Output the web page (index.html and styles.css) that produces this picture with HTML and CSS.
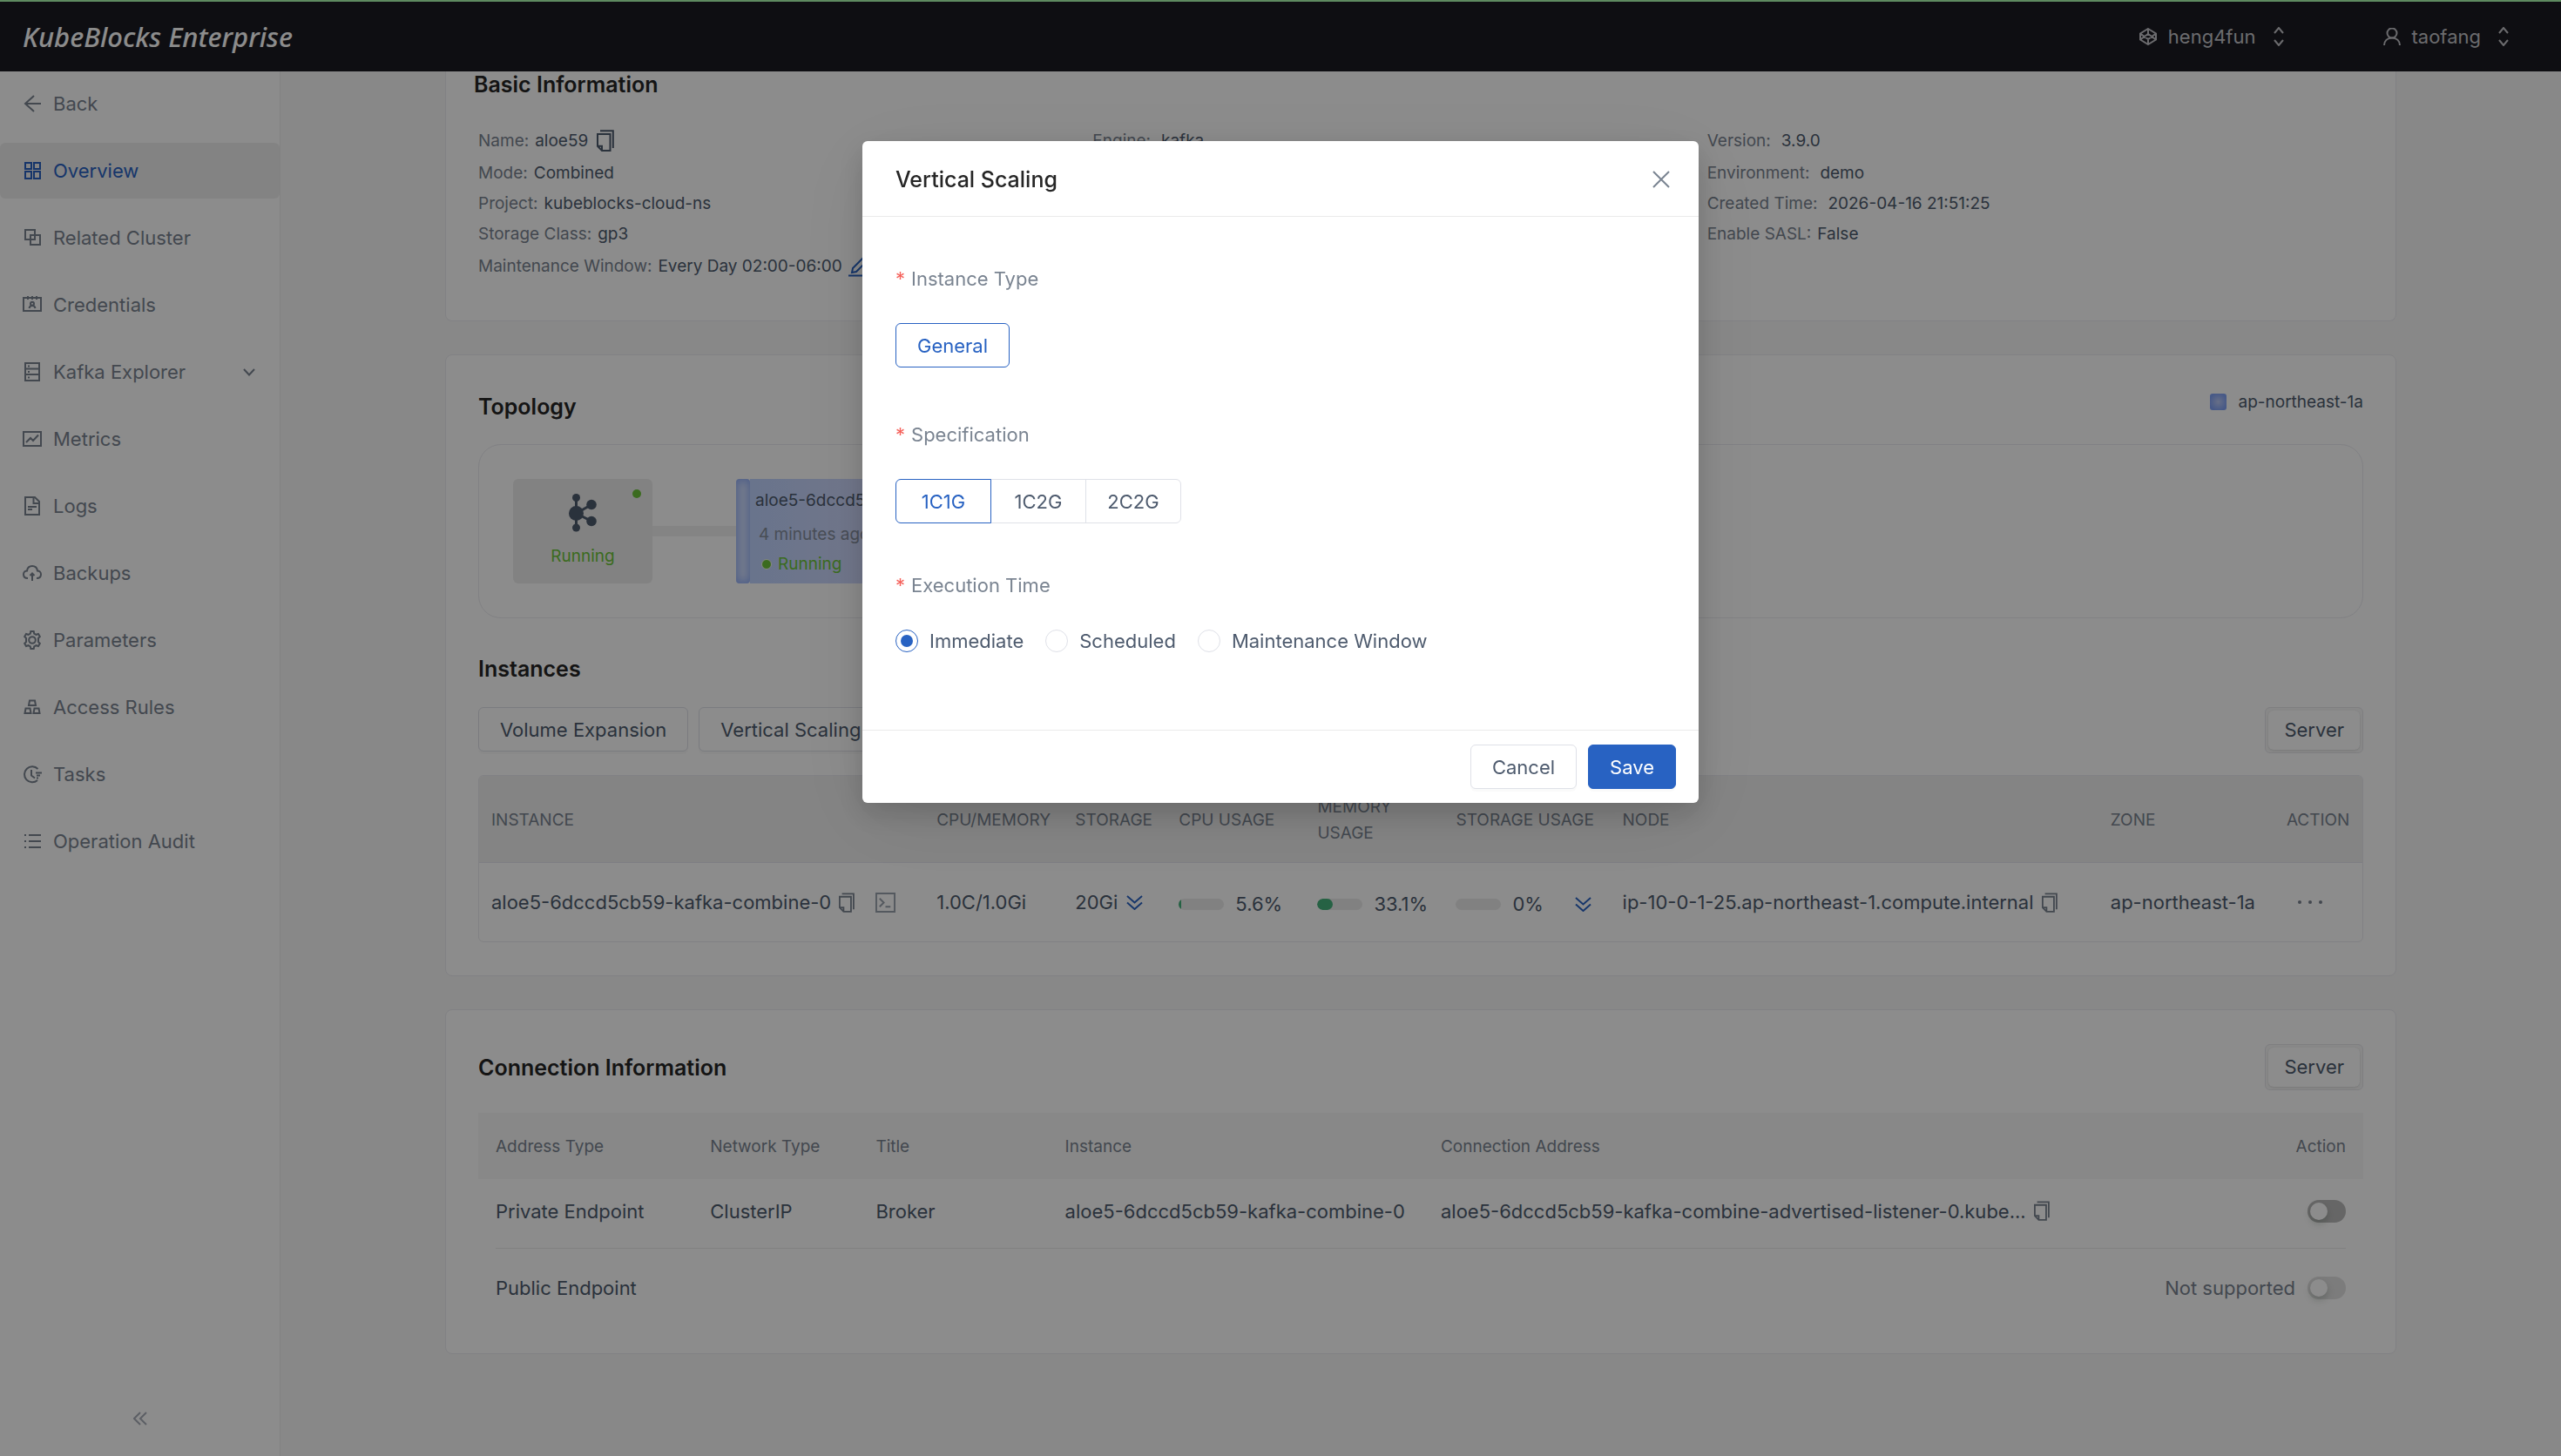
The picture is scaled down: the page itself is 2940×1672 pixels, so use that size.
FILE: index.html
```html
<!DOCTYPE html>
<html lang="en">
<head>
    <meta charset="UTF-8">
    <meta name="viewport" content="width=device-width, initial-scale=1.0">
    <title>Overview - KubeBlocks Enterprise</title>
    <link rel="stylesheet" href="styles.css">
</head>
<body>
    <!-- Shared icons -->
    <svg class="sprite" aria-hidden="true">
        <symbol id="copy" viewBox="0 0 20 25"><path d="M4 1.2H18.8V21M1 5H15.5V24H6L1 18.8ZM1 18.8H6V24"/></symbol>
        <symbol id="expand" viewBox="0 0 20 18"><path d="M1 1l9 8 9-8M1 9l9 8 9-8"/></symbol>
        <symbol id="updown" viewBox="0 0 12 22"><path d="M1 7l5-6 5 6M1 15l5 6 5-6"/></symbol>
    </svg>

    <header class="topbar">
        <div class="logo">KubeBlocks Enterprise</div>
        <div class="topbar-menus">
            <button class="topbar-menu" type="button">
                <svg class="icon-org" viewBox="0 0 20 20"><path d="M10 1l9 5.500v7L10 19l-9-5.500v-7zM1 6.500l9 6.500 9-6.500M1 13.500l9-6.500 9 6.500M10 1v6M10 13v6"/></svg>
                <span>heng4fun</span>
                <svg class="icon-updown"><use href="#updown"/></svg>
            </button>
            <button class="topbar-menu" type="button">
                <svg class="icon-org" viewBox="0 0 20 20"><circle cx="10" cy="6" r="5.500"/><path d="M1 20c0-5 3.500-8.500 9-8.500s9 3.500 9 8.500"/></svg>
                <span>taofang</span>
                <svg class="icon-updown"><use href="#updown"/></svg>
            </button>
        </div>
    </header>

    <div class="layout">
        <nav class="sidebar">
            <a class="nav-item" href="#">
                <svg viewBox="0 0 22 22"><path d="M21 11H3M13 2l-10 9 10 9"/></svg>Back
            </a>
            <a class="nav-item active" href="#">
                <svg viewBox="0 0 22 22"><path d="M3 2h7v7H3zM13 2h7v7h-7zM3 12h7v8H3zM13 12h7v8h-7z"/></svg>Overview
            </a>
            <a class="nav-item" href="#">
                <svg viewBox="0 0 22 22"><path d="M3 2h11v11H3zM9 8h11v11H9z"/></svg>Related Cluster
            </a>
            <a class="nav-item" href="#">
                <svg viewBox="0 0 22 22"><path d="M1 3h20v15H1zM6 1v4M11 1v4M16 1v4M7.500 15c.5-3 2-3 3.500-3s3 0 3.500 3"/><circle cx="11" cy="9.800" r="2"/></svg>Credentials
            </a>
            <a class="nav-item" href="#">
                <svg viewBox="0 0 22 22"><path d="M3 1h16v20H3zM3 7.500h16M3 14h16M6 4.500h2M6 11h2M6 17.500h2"/></svg>Kafka Explorer
                <svg class="nav-arrow" viewBox="0 0 14 9"><path d="M1 1l6 6.500L13 1"/></svg>
            </a>
            <a class="nav-item" href="#">
                <svg viewBox="0 0 22 22"><path d="M1 3h20v16H1zM4 15l5-5 3 3 6-6.500"/></svg>Metrics
            </a>
            <a class="nav-item" href="#">
                <svg viewBox="0 0 22 22"><path d="M3 1h11l5 5v15H3zM12.500 1v7H19M6 12h10M6 15h5"/></svg>Logs
            </a>
            <a class="nav-item" href="#">
                <svg viewBox="0 0 22 22"><path d="M6 17C2.500 17 1 15 1 12.500 1 10 3 8.500 5 8.500 5.500 5 8 3 11 3s5.500 2 6 5.500c2 0 4 1.500 4 4 0 2.500-1.500 4.500-5 4.500M11 20v-8M8.500 14l2.500-2.500 2.500 2.500"/></svg>Backups
            </a>
            <a class="nav-item" href="#">
                <svg viewBox="0 0 22 22"><circle cx="11" cy="11" r="3.800"/><path d="M8.800 3.500L9.300 1h3.400l.5 2.500 2.300 1.300 2.500-.8 1.800 3-1.800 1.800v4.400l1.800 1.800-1.800 3-2.500-.8-2.300 1.300-.5 2.500H9.300l-.5-2.500-2.300-1.300-2.500.8-1.800-3L4 13.200V8.800L2.200 7 4 4l2.500.8z"/></svg>Parameters
            </a>
            <a class="nav-item" href="#">
                <svg viewBox="0 0 22 22"><path d="M8 3.500h6L15 9H7zM3.500 12.500h5l1 5.500h-7zM13.500 12.500h5l1 5.500h-7z"/></svg>Access Rules
            </a>
            <a class="nav-item" href="#">
                <svg viewBox="0 0 22 22"><path d="M17.500 5A9 9 0 1 0 17 18M10 6v6.500l4 3M15 9.500h7M16 12.500h4M16 15.500h2"/></svg>Tasks
            </a>
            <a class="nav-item" href="#">
                <svg viewBox="0 0 22 22"><path d="M2 4h2M2 11h2M2 18h2M7 4h14M7 11h14M7 18h14"/></svg>Operation Audit
            </a>
            <button class="collapse" type="button" aria-label="Collapse menu">
                <svg viewBox="0 0 16 16"><path d="M8 1L1 8l7 7M15 1L8 8l7 7"/></svg>
            </button>
        </nav>

        <main class="content">
            <section class="card card-basic">
                <h2>Basic Information</h2>
                <div class="info">
                    <dl>
                        <div class="tall"><dt>Name:</dt><dd>aloe59</dd><svg class="icon-copy-lg"><use href="#copy"/></svg></div>
                        <div><dt>Mode:</dt><dd>Combined</dd></div>
                        <div><dt>Project:</dt><dd>kubeblocks-cloud-ns</dd></div>
                        <div><dt>Storage Class:</dt><dd>gp3</dd></div>
                        <div class="tall"><dt>Maintenance Window:</dt><dd>Every Day 02:00-06:00</dd><svg class="icon-edit" viewBox="0 0 24 24"><path d="M4 19l1-5L16 3l4 4L9 18zM0 22.500h24"/></svg></div>
                    </dl>
                    <dl class="wide-gap">
                        <div class="tall"><dt>Engine:</dt><dd>kafka</dd></div>
                    </dl>
                    <dl class="wide-gap">
                        <div class="tall"><dt>Version:</dt><dd>3.9.0</dd></div>
                        <div><dt>Environment:</dt><dd>demo</dd></div>
                        <div><dt>Created Time:</dt><dd>2026-04-16 21:51:25</dd></div>
                        <div class="narrow"><dt>Enable SASL:</dt><dd>False</dd></div>
                    </dl>
                </div>
            </section>

            <section class="card card-topology">
                <div class="card-head">
                    <h2>Topology</h2>
                    <div class="zone-legend"><span class="zone-mark"></span>ap-northeast-1a</div>
                </div>
                <div class="topology">
                    <div class="component">
                        <span class="component-dot"></span>
                        <svg class="icon-kafka" viewBox="0 0 32 44"><path d="M8.500 5v34M8.500 22.500L26 12.500M8.500 22.500L26 31.500"/><circle cx="8.500" cy="4.500" r="4.500"/><circle cx="8.500" cy="22.500" r="8.500"/><circle cx="8.500" cy="39" r="4.500"/><circle cx="26" cy="12.500" r="5.800"/><circle cx="26" cy="31.500" r="5.800"/></svg>
                        <span class="running">Running</span>
                    </div>
                    <div class="link-line"></div>
                    <div class="zone-bar"></div>
                    <div class="pod">
                        <div class="pod-name">aloe5-6dccd5cb59</div>
                        <div class="pod-age">4 minutes ago</div>
                        <div class="pod-state"><span class="state-dot"></span><span class="running">Running</span></div>
                    </div>
                </div>

                <h2 class="sub-title">Instances</h2>
                <div class="toolbar">
                    <button class="btn" type="button">Volume Expansion</button>
                    <button class="btn" type="button">Vertical Scaling</button>
                    <button class="btn-server" type="button"><span>Server</span></button>
                </div>
                <div class="table-frame">
                    <table class="instances">
                        <colgroup>
                            <col class="w-instance"><col class="w-cpu"><col class="w-storage"><col class="w-usage"><col class="w-usage"><col class="w-disk"><col class="w-node"><col class="w-zone"><col class="w-action">
                        </colgroup>
                        <thead>
                            <tr>
                                <th>INSTANCE</th><th>CPU/MEMORY</th><th>STORAGE</th><th>CPU USAGE</th><th>MEMORY<br>USAGE</th><th>STORAGE USAGE</th><th>NODE</th><th>ZONE</th><th>ACTION</th>
                            </tr>
                        </thead>
                        <tbody>
                            <tr>
                                <td><div class="cell">aloe5-6dccd5cb59-kafka-combine-0<svg class="icon-copy"><use href="#copy"/></svg><svg class="icon-terminal" viewBox="0 0 24 24"><path d="M1 1h22v22H1zM5 7l5 5-5 5M12 17h6"/></svg></div></td>
                                <td>1.0C/1.0Gi</td>
                                <td><div class="cell">20Gi<svg class="icon-expand"><use href="#expand"/></svg></div></td>
                                <td><div class="cell usage"><span class="bar"><span class="bar-fill" style="width: 5.6%"></span></span>5.6%</div></td>
                                <td><div class="cell usage"><span class="bar"><span class="bar-fill" style="width: 33.1%"></span></span>33.1%</div></td>
                                <td><div class="cell usage"><span class="bar"></span>0%<svg class="icon-expand end"><use href="#expand"/></svg></div></td>
                                <td><div class="cell">ip-10-0-1-25.ap-northeast-1.compute.internal<svg class="icon-copy"><use href="#copy"/></svg></div></td>
                                <td>ap-northeast-1a</td>
                                <td><button class="more" type="button" aria-label="More actions"><i></i><i></i><i></i></button></td>
                            </tr>
                        </tbody>
                    </table>
                </div>
            </section>

            <section class="card card-connection">
                <div class="card-head center">
                    <h2>Connection Information</h2>
                    <button class="btn-server" type="button"><span>Server</span></button>
                </div>
                <table class="connections">
                    <colgroup>
                        <col class="w-address"><col class="w-network"><col class="w-title"><col class="w-inst"><col class="w-conn"><col class="w-switch">
                    </colgroup>
                    <thead>
                        <tr><th>Address Type</th><th>Network Type</th><th>Title</th><th>Instance</th><th>Connection Address</th><th>Action</th></tr>
                    </thead>
                    <tbody>
                        <tr>
                            <td>Private Endpoint</td>
                            <td>ClusterIP</td>
                            <td>Broker</td>
                            <td>aloe5-6dccd5cb59-kafka-combine-0</td>
                            <td><div class="cell">aloe5-6dccd5cb59-kafka-combine-advertised-listener-0.kube...<svg class="icon-copy"><use href="#copy"/></svg></div></td>
                            <td><div class="cell action"><input class="switch" type="checkbox" role="switch" aria-label="Private endpoint"></div></td>
                        </tr>
                        <tr>
                            <td>Public Endpoint</td>
                            <td></td>
                            <td></td>
                            <td></td>
                            <td></td>
                            <td><div class="cell action"><label for="public-switch">Not supported</label><input class="switch" id="public-switch" type="checkbox" role="switch" disabled></div></td>
                        </tr>
                    </tbody>
                </table>
            </section>
        </main>
    </div>

    <div class="mask">
        <form class="modal" role="dialog" aria-labelledby="modal-title">
            <div class="modal-head">
                <h3 id="modal-title">Vertical Scaling</h3>
                <button class="close" type="button" aria-label="Close">
                    <svg viewBox="0 0 20 20"><path d="M1 1l18 18M19 1L1 19"/></svg>
                </button>
            </div>
            <div class="modal-body">
                <fieldset class="form-item">
                    <legend>Instance Type</legend>
                    <div class="segments">
                        <label class="segment"><input type="radio" name="type" checked><span>General</span></label>
                    </div>
                </fieldset>
                <fieldset class="form-item compact">
                    <legend>Specification</legend>
                    <div class="segments">
                        <label class="segment"><input type="radio" name="spec" checked><span>1C1G</span></label>
                        <label class="segment"><input type="radio" name="spec"><span>1C2G</span></label>
                        <label class="segment"><input type="radio" name="spec"><span>2C2G</span></label>
                    </div>
                </fieldset>
                <fieldset class="form-item last">
                    <legend>Execution Time</legend>
                    <div class="radios">
                        <label class="radio"><input type="radio" name="time" checked>Immediate</label>
                        <label class="radio"><input type="radio" name="time">Scheduled</label>
                        <label class="radio"><input type="radio" name="time">Maintenance Window</label>
                    </div>
                </fieldset>
            </div>
            <div class="modal-foot">
                <button class="btn" type="button">Cancel</button>
                <button class="btn btn-primary" type="submit">Save</button>
            </div>
        </form>
    </div>
</body>
</html>
```
FILE: styles.css
```css
* {
    box-sizing: border-box;
}

body {
    font-family: Inter, "Liberation Sans", sans-serif;
    font-size: 22px;
    line-height: 30px;
    margin: 0;
    height: 100vh;
    display: flex;
    flex-direction: column;
    overflow: hidden;
    background-color: #f8f8f8;
    color: #4e5b6e;
}

h2, h3, dl, dd, fieldset {
    margin: 0;
    padding: 0;
    border: 0;
}

button {
    font: inherit;
    color: inherit;
    background: none;
    border: 0;
    padding: 0;
}

svg {
    fill: none;
    stroke: currentColor;
    stroke-width: 2;
    flex: none;
}

.sprite {
    display: none;
}

/* Top bar */
.topbar {
    display: flex;
    justify-content: space-between;
    align-items: center;
    flex: none;
    height: 82px;
    padding: 0 60px 0 26px;
    background-color: #1a1a22;
    border-top: 2px solid #acfcb0;
}

.logo {
    font-family: "Noto Sans", sans-serif;
    font-size: 31px;
    font-style: italic;
    font-weight: 500;
    color: #fff;
}

.topbar-menus {
    display: flex;
    gap: 114px;
    color: #c4c4c8;
}

.topbar-menu {
    display: flex;
    align-items: center;
    gap: 13px;
}

.icon-org {
    width: 20px;
    height: 20px;
}

.icon-updown {
    width: 12px;
    height: 22px;
    margin-left: 7px;
}

.layout {
    display: flex;
    flex: 1;
    min-height: 0;
}

/* Sidebar */
.sidebar {
    display: flex;
    flex-direction: column;
    gap: 13px;
    flex: none;
    width: 322px;
    padding: 5px 0 36px;
    background-color: #fff;
    border-right: 1px solid #ebebeb;
}

.nav-item {
    display: flex;
    align-items: center;
    gap: 13px;
    height: 64px;
    padding: 0 28px 0 26px;
    border-radius: 6px;
    color: #7a8491;
    text-decoration: none;
}

.nav-item svg {
    width: 22px;
    height: 22px;
}

.nav-item .nav-arrow {
    width: 14px;
    height: 9px;
    margin-left: auto;
}

.nav-item.active {
    background-color: #efefef;
    color: #2862c2;
}

.collapse {
    align-self: center;
    margin-top: auto;
    height: 22px;
    color: #a8aeb8;
}

.collapse svg {
    width: 16px;
    height: 16px;
}

/* Cards */
.content {
    flex: 1;
    padding: 0 32px;
    overflow: hidden;
}

.card {
    max-width: 2240px;
    margin: 0 auto 38px;
    padding: 0 37px;
    background-color: #fff;
    border: 1px solid #ebebf0;
    border-radius: 8px;
}

.card h2 {
    font-size: 25px;
    font-weight: 600;
    color: #262626;
}

.card-basic {
    padding: 0 32px 43px;
    border-top: 0;
    border-radius: 0 0 8px 8px;
}

.card-topology {
    padding-top: 44px;
    padding-bottom: 38px;
}

.card-connection {
    padding-top: 39px;
    padding-bottom: 28px;
}

.card-head {
    display: flex;
    justify-content: space-between;
}

.card-head.center {
    align-items: center;
}

.info {
    display: grid;
    grid-template-columns: repeat(3, 1fr);
    margin-top: 30px;
    padding: 0 53px 0 5px;
    font-size: 19px;
}

.info dl > div {
    display: flex;
    align-items: center;
    gap: 7px;
    height: 35px;
}

.info .wide-gap > div {
    gap: 12px;
}

.info .wide-gap > .narrow {
    gap: 7px;
}

.info dl > .tall {
    height: 39px;
}

.info dt {
    color: #7a8491;
}

.icon-copy-lg {
    width: 20px;
    height: 25px;
    margin-left: 3px;
}

.icon-edit {
    width: 24px;
    height: 24px;
    color: #2862c2;
}

/* Topology */
.zone-legend {
    display: flex;
    align-items: center;
    gap: 13px;
    height: 19px;
    font-size: 19px;
}

.zone-mark {
    width: 19px;
    height: 19px;
    border-radius: 3px;
    background: radial-gradient(#bccaf6, #81a2f6 75%);
}

.topology {
    display: flex;
    align-items: center;
    margin-top: 28px;
    padding: 39px;
    border: 1px solid #ebebf0;
    border-radius: 26px;
    font-size: 19px;
}

.component {
    position: relative;
    display: flex;
    flex-direction: column;
    align-items: center;
    gap: 13px;
    width: 160px;
    height: 120px;
    padding-top: 17px;
    border-radius: 6px;
    background-color: #ededed;
}

.component-dot {
    position: absolute;
    top: 12px;
    right: 13px;
    width: 10px;
    height: 10px;
    border-radius: 50%;
    background-color: #6cc43a;
}

.icon-kafka {
    width: 32px;
    height: 44px;
    fill: currentColor;
    stroke-width: 3;
}

.icon-kafka circle {
    stroke: none;
}

.running {
    color: #6cc43a;
}

.link-line {
    width: 96px;
    height: 12px;
    background-color: #f0f0f0;
}

.zone-bar {
    width: 16px;
    height: 120px;
    border-radius: 4px;
    background-color: #dce6ff;
    box-shadow: inset 0 0 10px 3px #94b0f8;
}

.pod {
    height: 120px;
    padding: 10px 20px 0 6px;
    background: linear-gradient(90deg, #bfd3ff, #d9dcfc);
}

.pod-age {
    padding: 9px 0 4px 4px;
    color: #858e9d;
}

.pod-state {
    display: flex;
    align-items: center;
    gap: 7px;
    padding-left: 7px;
}

.state-dot {
    width: 12px;
    height: 12px;
    border: 1px solid #f4f8ee;
    border-radius: 50%;
    background-color: #6cc43a;
}

.sub-title {
    margin-top: 43px;
}

/* Buttons */
.btn {
    height: 51px;
    padding: 0 24px;
    border: 1px solid #dfe1e8;
    border-radius: 6px;
    background-color: #fff;
    box-shadow: 0 3px 0 rgba(0, 0, 0, 0.02);
}

.btn-primary {
    border-color: #2862c2;
    background-color: #2862c2;
    color: #fff;
}

.btn-server {
    height: 53px;
    padding: 3px;
    border: 1px solid #e6e6ea;
    border-radius: 6px;
    background-color: #f8f8f8;
}

.btn-server span {
    display: block;
    padding: 7px 18px 8px;
    border-radius: 6px;
    background-color: #fff;
    box-shadow: 0 1px 3px rgba(0, 0, 0, 0.12);
}

.toolbar {
    display: flex;
    gap: 12px;
    margin: 29px 0 25px;
}

.toolbar .btn-server {
    margin-left: auto;
}

/* Tables */
table {
    width: 100%;
    border-spacing: 0;
    table-layout: fixed;
}

th, td {
    padding: 0;
    text-align: left;
    white-space: nowrap;
}

th {
    font-size: 19px;
    font-weight: 400;
    color: #7a8491;
}

.cell {
    display: flex;
    align-items: center;
}

.table-frame {
    border: 1px solid #ebebf0;
    border-radius: 6px;
    overflow: hidden;
}

.instances th, .instances td {
    padding: 0 0 0 14px;
}

.instances th {
    height: 100px;
    padding-top: 2px;
    background-color: #f0f0f0;
    border-bottom: 1px solid #e6e6ee;
}

.instances td {
    height: 90px;
}

.w-instance { width: 511px; }
.w-cpu { width: 159px; }
.w-storage { width: 119px; }
.w-usage { width: 159px; }
.w-disk { width: 191px; }
.w-node { width: 560px; }
.w-zone { width: 202px; }
.w-action { width: 101px; }

.icon-copy {
    width: 18px;
    height: 23px;
    margin-left: 9px;
    color: #7a8491;
}

.icon-terminal {
    width: 23px;
    height: 23px;
    margin-left: 24px;
    color: #9aa2ad;
}

.icon-expand {
    width: 19px;
    height: 17px;
    margin-left: 10px;
    color: #2862c2;
}

.icon-expand.end {
    margin-left: 36px;
}

.usage {
    padding-top: 4px;
}

.bar {
    display: flex;
    width: 52px;
    height: 13px;
    margin-right: 13px;
    border-radius: 7px;
    overflow: hidden;
    background-color: #ebebeb;
}

.bar-fill {
    border-radius: 7px;
    background-color: #46b27c;
}

.more {
    display: flex;
    gap: 8px;
    padding: 13px;
}

.more i {
    width: 4px;
    height: 4px;
    border-radius: 50%;
    background-color: #7a8491;
}

.connections {
    margin-top: 26px;
}

.connections th {
    height: 76px;
    padding-top: 1px;
    background-color: #f8f8f8;
}

.connections th:first-child, .connections td:first-child {
    padding-left: 20px;
}

.connections th:last-child, .connections td:last-child {
    padding-right: 20px;
    text-align: right;
}

.connections td {
    height: 80px;
    padding-bottom: 7px;
}

.connections tbody tr:first-child {
    background: linear-gradient(#ebebeb, #ebebeb) no-repeat center bottom / calc(100% - 40px) 1px;
}

.connections tr:last-child td {
    height: 92px;
    padding-bottom: 2px;
}

.w-address { width: 266px; }
.w-network { width: 190px; }
.w-title { width: 217px; }
.w-inst { width: 431px; }
.w-conn { width: 740px; }
.w-switch { width: 318px; }

.action {
    justify-content: flex-end;
    gap: 14px;
    color: #7a8491;
}

.switch {
    appearance: none;
    width: 44px;
    height: 26px;
    margin: 0;
    padding: 3px;
    border-radius: 13px;
    background-color: #bbb;
}

.switch::before {
    content: "";
    display: block;
    width: 20px;
    height: 20px;
    border-radius: 50%;
    background-color: #fff;
    box-shadow: 0 4px 8px rgba(0, 35, 11, 0.2);
}

.switch:disabled {
    background-color: #e2e2e2;
}

/* Dialog */
.mask {
    position: fixed;
    inset: 0;
    display: flex;
    justify-content: center;
    align-items: flex-start;
    padding-top: 162px;
    background-color: rgba(0, 0, 0, 0.45);
}

.modal {
    width: 960px;
    border-radius: 6px;
    background-color: #fff;
    box-shadow: 0 12px 32px rgba(0, 0, 0, 0.16), 0 18px 96px rgba(0, 0, 0, 0.08);
}

.modal-head {
    display: flex;
    justify-content: space-between;
    align-items: center;
    height: 87px;
    padding: 2px 33px 0 38px;
    border-bottom: 1px solid #ebebeb;
}

.modal h3 {
    font-size: 25px;
    font-weight: 500;
    color: #262626;
}

.close {
    display: flex;
    color: #7a8491;
}

.close svg {
    width: 20px;
    height: 20px;
}

.modal-body {
    padding: 56px 38px 87px;
}

.form-item {
    margin-bottom: 62px;
}

.form-item.compact {
    margin-bottom: 56px;
}

.form-item.last {
    margin-bottom: 0;
}

.form-item legend {
    margin-bottom: 36px;
    padding: 0;
    color: #7a8491;
}

.form-item.last legend {
    margin-bottom: 34px;
}

.form-item legend::before {
    content: "*";
    margin-right: 7px;
    color: #f5605a;
}

.segments {
    display: flex;
}

.segment {
    position: relative;
}

.segment + .segment {
    margin-left: -1px;
}

.segment input {
    position: absolute;
    inset: 0;
    margin: 0;
    opacity: 0;
}

.segment span {
    display: block;
    min-width: 110px;
    padding: 10px 24px 9px;
    border: 1px solid #dfe1e8;
    text-align: center;
}

.segment:first-child span {
    border-radius: 6px 0 0 6px;
}

.segment:last-child span {
    border-radius: 0 6px 6px 0;
}

.segment:only-child span {
    border-radius: 6px;
}

.segment input:checked + span {
    position: relative;
    z-index: 1;
    border-color: #2862c2;
    color: #2862c2;
}

.radios {
    display: flex;
    gap: 25px;
}

.radio {
    display: flex;
    align-items: center;
    gap: 13px;
}

.radio input {
    appearance: none;
    display: grid;
    place-items: center;
    width: 26px;
    height: 26px;
    margin: 0;
    border: 1px solid #dfe1e8;
    border-radius: 50%;
}

.radio input:checked {
    border-color: #2862c2;
}

.radio input:checked::before {
    content: "";
    width: 14px;
    height: 14px;
    border-radius: 50%;
    background-color: #2862c2;
}

.modal-foot {
    display: flex;
    justify-content: flex-end;
    gap: 13px;
    padding: 16px 26px;
    border-top: 1px solid #ebebeb;
}
```
